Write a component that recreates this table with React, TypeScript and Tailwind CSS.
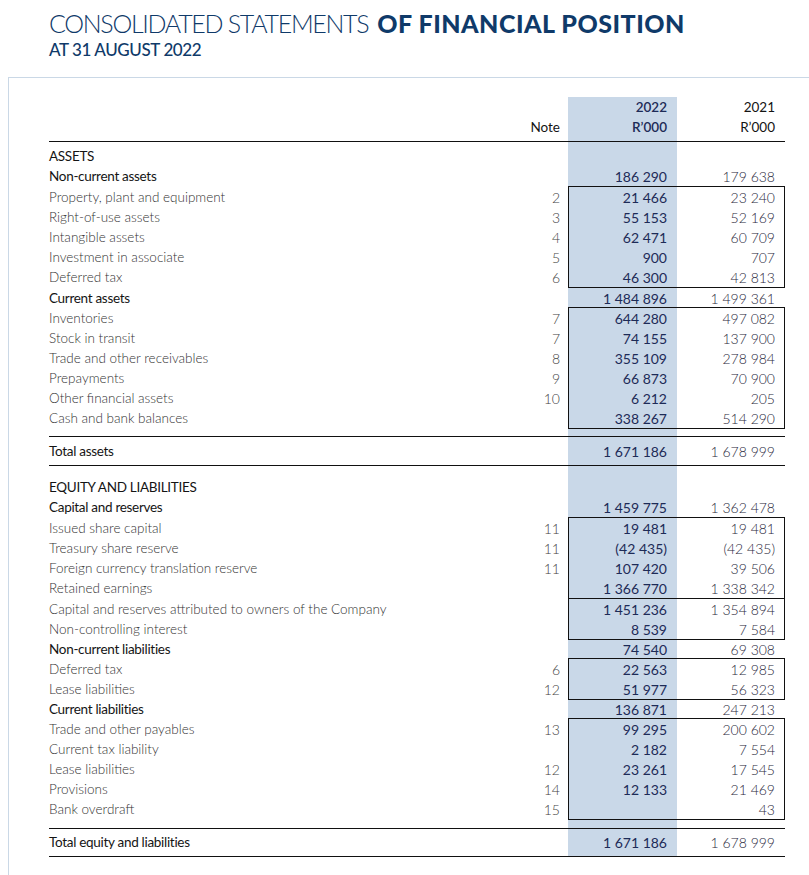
import React from "react";

type Row = { label: string; head?: boolean; note?: string; v22?: string; v21?: string };
type Block =
  | { kind: "row"; row: Row }
  | { kind: "box"; rows: Row[]; cls?: string; noTop?: boolean }
  | { kind: "space"; h: string }
  | { kind: "total"; row: Row; h: string };

const blocks: Block[] = [
  { kind: "row", row: { label: "ASSETS", head: true } },
  { kind: "row", row: { label: "Non-current assets", head: true, v22: "186 290", v21: "179 638" } },
  {
    kind: "box",
    rows: [
      { label: "Property, plant and equipment", note: "2", v22: "21 466", v21: "23 240" },
      { label: "Right-of-use assets", note: "3", v22: "55 153", v21: "52 169" },
      { label: "Intangible assets", note: "4", v22: "62 471", v21: "60 709" },
      { label: "Investment in associate", note: "5", v22: "900", v21: "707" },
      { label: "Deferred tax", note: "6", v22: "46 300", v21: "42 813" },
    ],
  },
  { kind: "row", row: { label: "Current assets", head: true, v22: "1 484 896", v21: "1 499 361" } },
  {
    kind: "box",
    cls: "-mt-px",
    rows: [
      { label: "Inventories", note: "7", v22: "644 280", v21: "497 082" },
      { label: "Stock in transit", note: "7", v22: "74 155", v21: "137 900" },
      { label: "Trade and other receivables", note: "8", v22: "355 109", v21: "278 984" },
      { label: "Prepayments", note: "9", v22: "66 873", v21: "70 900" },
      { label: "Other financial assets", note: "10", v22: "6 212", v21: "205" },
      { label: "Cash and bank balances", v22: "338 267", v21: "514 290" },
    ],
  },
  { kind: "space", h: "h-[7px]" },
  { kind: "total", h: "h-[30px]", row: { label: "Total assets", head: true, v22: "1 671 186", v21: "1 678 999" } },
  { kind: "space", h: "h-[11px]" },
  { kind: "row", row: { label: "EQUITY AND LIABILITIES", head: true } },
  { kind: "row", row: { label: "Capital and reserves", head: true, v22: "1 459 775", v21: "1 362 478" } },
  {
    kind: "box",
    rows: [
      { label: "Issued share capital", note: "11", v22: "19 481", v21: "19 481" },
      { label: "Treasury share reserve", note: "11", v22: "(42 435)", v21: "(42 435)" },
      { label: "Foreign currency translation reserve", note: "11", v22: "107 420", v21: "39 506" },
      { label: "Retained earnings", v22: "1 366 770", v21: "1 338 342" },
    ],
  },
  {
    kind: "box",
    noTop: true,
    cls: "-mb-px",
    rows: [
      { label: "Capital and reserves attributed to owners of the Company", v22: "1 451 236", v21: "1 354 894" },
      { label: "Non-controlling interest", v22: "8 539", v21: "7 584" },
    ],
  },
  { kind: "row", row: { label: "Non-current liabilities", head: true, v22: "74 540", v21: "69 308" } },
  {
    kind: "box",
    cls: "-mt-px -mb-px",
    rows: [
      { label: "Deferred tax", note: "6", v22: "22 563", v21: "12 985" },
      { label: "Lease liabilities", note: "12", v22: "51 977", v21: "56 323" },
    ],
  },
  { kind: "row", row: { label: "Current liabilities", head: true, v22: "136 871", v21: "247 213" } },
  {
    kind: "box",
    cls: "-mt-px",
    rows: [
      { label: "Trade and other payables", note: "13", v22: "99 295", v21: "200 602" },
      { label: "Current tax liability", v22: "2 182", v21: "7 554" },
      { label: "Lease liabilities", note: "12", v22: "23 261", v21: "17 545" },
      { label: "Provisions", note: "14", v22: "12 133", v21: "21 469" },
      { label: "Bank overdraft", note: "15", v21: "43" },
    ],
  },
  { kind: "space", h: "h-[8px]" },
  { kind: "total", h: "h-[29px]", row: { label: "Total equity and liabilities", head: true, v22: "1 671 186", v21: "1 678 999" } },
];

function Label({ row }: { row: Row }) {
  return (
    <div className="flex h-[20px] items-center">
      <div
        className={
          row.head
            ? "flex-1 text-[13.5px] text-[#141414] tracking-[-0.3px]"
            : "flex-1 text-[13.5px] font-light text-[#333333]"
        }
      >
        {row.label}
      </div>
      <div className="w-[68px] pr-[8px] text-right text-[14px] font-light text-[#444]">{row.note ?? ""}</div>
    </div>
  );
}

function Values({ row, boxed }: { row: Row; boxed?: boolean }) {
  return (
    <div className="flex h-[20px]">
      <div
        className={
          (boxed ? "w-[108px] " : "w-[109px] ") +
          "flex items-center justify-end bg-[#c9d8e8] pr-[10px] text-[14px] text-[#1d2b57]"
        }
      >
        {row.v22 ?? ""}
      </div>
      <div
        className={
          (boxed ? "w-[107px] pr-[9px] " : "w-[108px] pr-[10px] ") +
          "flex items-center justify-end text-[14px] font-light text-[#2a293c]"
        }
      >
        {row.v21 ?? ""}
      </div>
    </div>
  );
}

function PlainRow({ row }: { row: Row }) {
  return (
    <div className="flex">
      <div className="flex-1">
        <Label row={row} />
      </div>
      <div className="w-[217px]">
        <Values row={row} />
      </div>
    </div>
  );
}

function BoxBlock({ rows, noTop, cls }: { rows: Row[]; noTop?: boolean; cls?: string }) {
  return (
    <div className={"relative flex " + (cls ?? "")}>
      <div className={(noTop ? "pt-0" : "pt-px") + " flex-1 pb-px"}>
        {rows.map((r, i) => (
          <Label key={i} row={r} />
        ))}
      </div>
      <div className={(noTop ? "border-t-0 " : "") + "w-[217px] border border-[#111]"}>
        {rows.map((r, i) => (
          <Values key={i} row={r} boxed />
        ))}
      </div>
    </div>
  );
}

function Spacer({ h }: { h: string }) {
  return (
    <div className={"flex " + h}>
      <div className="flex-1" />
      <div className="w-[109px] bg-[#c9d8e8]" />
      <div className="w-[108px]" />
    </div>
  );
}

function Total({ row, h }: { row: Row; h: string }) {
  return (
    <div className={"flex border-y border-[#111] " + h}>
      <div className="flex flex-1 items-center text-[13.5px] text-[#141414] tracking-[-0.3px]">{row.label}</div>
      <div className="flex w-[109px] items-center justify-end bg-[#c9d8e8] pr-[10px] text-[14px] text-[#1d2b57]">
        {row.v22}
      </div>
      <div className="flex w-[108px] items-center justify-end pr-[10px] text-[14px] font-light text-[#2a293c]">
        {row.v21}
      </div>
    </div>
  );
}

export default function App() {
  return (
    <div className="h-[875px] w-[809px] overflow-hidden bg-white" style={{ fontFamily: "Lato, 'Liberation Sans', sans-serif" }}>
      <div className="h-[77px] pl-[49px] pt-[8px]">
        <div className="flex items-baseline text-[25px] leading-[30px] text-[#0f3a69]">
          <span className="font-light tracking-[-1.3px]">CONSOLIDATED STATEMENTS</span>
          <span className="ml-[9px] font-black tracking-[0.5px]">OF FINANCIAL POSITION</span>
        </div>
        <div className="mt-[2px] text-[17px] leading-[20px] font-medium text-[#0f3a69] tracking-[-0.4px]">AT 31 AUGUST 2022</div>
      </div>
      <div className="ml-[8px] h-[798px] border-l border-t border-[#cad8e6] pl-[40px] pr-[24px] pt-[19px]">
        <div className="flex h-[45px] border-b border-[#111]">
          <div className="flex-1" />
          <div className="flex w-[68px] items-start justify-end pr-[8px] pt-[20px] text-[13.5px] text-[#141414]">
            <div className="flex h-[20px] items-center">Note</div>
          </div>
          <div className="w-[109px] bg-[#c9d8e8] pr-[10px] text-right text-[13.5px] font-semibold text-[#1d2b57]">
            <div className="flex h-[20px] items-center justify-end">2022</div>
            <div className="flex h-[20px] items-center justify-end">R’000</div>
          </div>
          <div className="w-[108px] pr-[10px] text-right text-[13.5px] text-[#141414]">
            <div className="flex h-[20px] items-center justify-end">2021</div>
            <div className="flex h-[20px] items-center justify-end">R’000</div>
          </div>
        </div>
        <Spacer h="h-[4px]" />
        {blocks.map((b, i) => {
          if (b.kind === "row") return <PlainRow key={i} row={b.row} />;
          if (b.kind === "box") return <BoxBlock key={i} rows={b.rows} noTop={b.noTop} cls={b.cls} />;
          if (b.kind === "space") return <Spacer key={i} h={b.h} />;
          return <Total key={i} row={b.row} h={b.h} />;
        })}
      </div>
    </div>
  );
}
